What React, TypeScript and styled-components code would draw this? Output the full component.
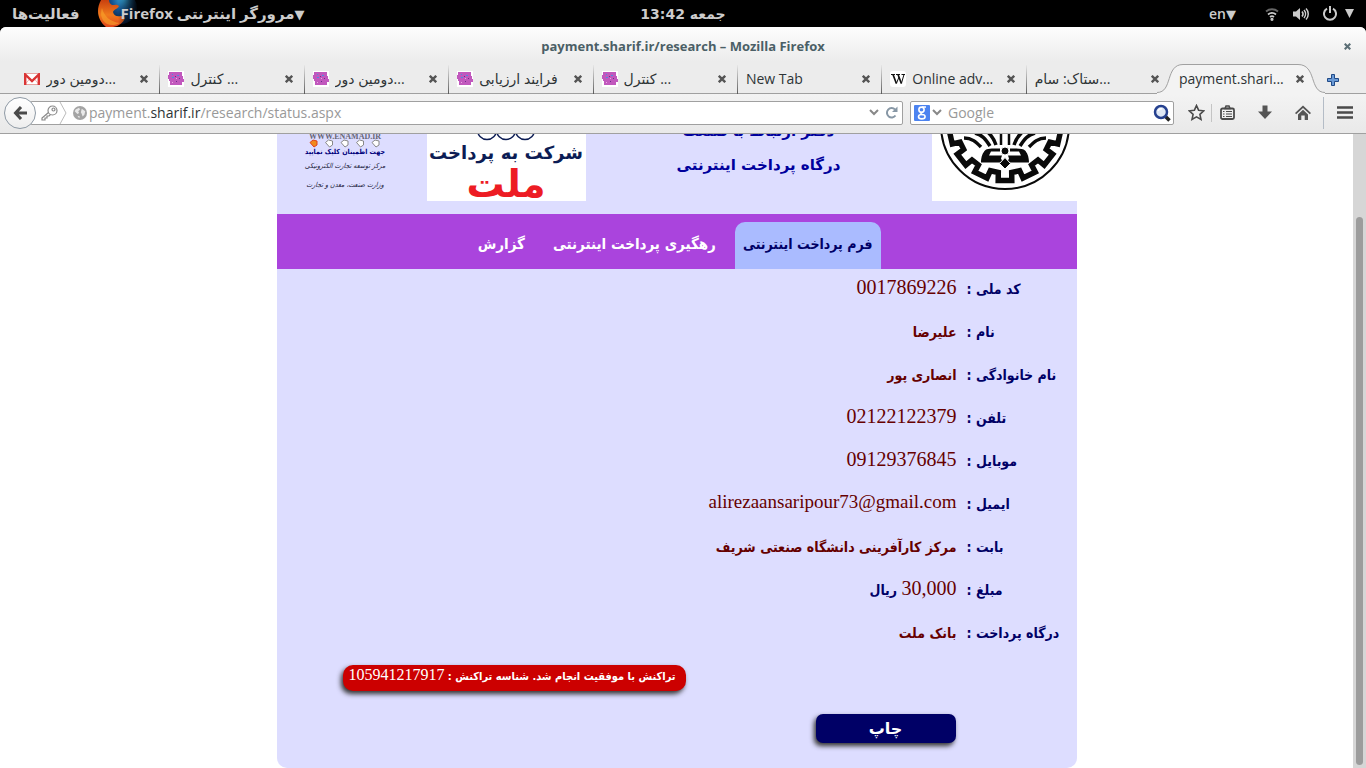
import React from 'react';
import styled, { createGlobalStyle } from 'styled-components';

const ui = "'Open Sans', 'DejaVu Sans', sans-serif";
const persian = "'DejaVu Sans Condensed', 'DejaVu Sans', sans-serif";

const Global = createGlobalStyle`
  * { box-sizing: border-box; }
  html, body { margin: 0; height: 100%; }
  body { background: #000; overflow: hidden; font-family: ${ui}; }
  #root { height: 100%; }
  button { border: 0; padding: 0; background: none; font: inherit; color: inherit; }
  svg { display: block; flex: none; }
`;

const Desktop = styled.div`
  height: 100%;
  display: flex;
  flex-direction: column;
`;

const TopBar = styled.header`
  height: 27px;
  flex: none;
  display: grid;
  grid-template-columns: 1fr auto 1fr;
  align-items: center;
  padding: 0 12px;
  color: #ccc;
  font: bold 14px/26px 'DejaVu Sans', sans-serif;
`;
const TopGroup = styled.div<{ $end?: boolean }>`
  display: flex;
  align-items: center;
  justify-content: ${p => (p.$end ? 'flex-end' : 'flex-start')};
  gap: ${p => (p.$end ? '14px' : '17px')};
  height: 27px;
`;
const Activities = styled.button`
  && { font-size: 15px; }
`;
const AppMenu = styled.button`
  && { display: flex; align-items: center; height: 27px; font: inherit; color: #ccc; }
`;
const AppName = styled.span`
  margin-left: -18px;
  font: bold 15px/26px ${ui};
`;
const MenuArrow = styled.span`
  font-size: 13px;
`;
const LangButton = styled.button`
  && { display: flex; font: 600 14px/26px ${ui}; margin-right: 15px; }
`;
const PowerGroup = styled.button`
  && { display: flex; align-items: center; gap: 8px; }
`;

const Window = styled.div`
  flex: 1;
  min-height: 0;
  display: flex;
  flex-direction: column;
  background: #ececec;
  border-radius: 6px 6px 0 0;
  overflow: hidden;
`;
const TitleBar = styled.div`
  height: 38px;
  flex: none;
  display: grid;
  grid-template-columns: 1fr auto 1fr;
  align-items: center;
  padding: 0 15px;
  background: linear-gradient(#fdfdfd, #ececec 34px);
  color: #4b5f66;
  font: bold 13px/38px 'Open Sans', sans-serif;
`;
const CloseWindow = styled.button`
  && { grid-column: 3; justify-self: end; }
`;
const Title = styled.h1`
  grid-column: 2;
  margin: 0;
  font: inherit;
`;

const TabStrip = styled.nav`
  height: 29px;
  flex: none;
  display: flex;
  padding: 0 27px 0 16px;
  background: linear-gradient(#a0a0a0, #a0a0a0) bottom / 100% 1px no-repeat;
`;
const TabItem = styled.div<{ $divider?: boolean }>`
  flex: 1 1 0;
  min-width: 0;
  display: flex;
  align-items: center;
  gap: 6px;
  padding: 0 11px 1px 8px;
  color: #2e3436;
  font-size: 14px;
  line-height: 28px;
  border-right: ${p => (p.$divider ? '1px solid' : '0 solid')};
  border-image: linear-gradient(#ececec, #555) 1;
`;
const TabLabel = styled.span`
  flex: 1;
  overflow: hidden;
  white-space: nowrap;
`;
const ActiveTab = styled.div`
  position: relative;
  flex: 0 0 141px;
  display: flex;
  align-items: center;
  padding: 0 7px 1px 9px;
  color: #2e3436;
  font-size: 14px;
  line-height: 28px;
`;
const ActiveShape = styled.svg`
  position: absolute;
  left: -13px;
  top: -1px;
`;
const ActiveContent = styled.span`
  position: relative;
  flex: 1;
  white-space: nowrap;
`;
const AboveShape = styled.button`
  && { position: relative; }
`;
const NewTabButton = styled.button`
  && { margin-left: 16px; }
`;

const Toolbar = styled.div`
  height: 40px;
  flex: none;
  display: flex;
  align-items: center;
  padding: 0 13px 2px 4px;
  background: linear-gradient(#f3f3f3, #e9e9e9);
  border-bottom: 1px solid #a0a0a0;
`;
const BackButton = styled.button`
  && {
    position: relative;
    z-index: 1;
    flex: none;
    width: 32px;
    height: 32px;
    border: 1px solid #8f9aa5;
    border-radius: 50%;
    background: linear-gradient(#fff, #eee);
    display: flex;
    align-items: center;
    justify-content: center;
  }
`;
const Field = styled.div<{ $search?: boolean }>`
  flex: ${p => (p.$search ? '0 0 264px' : '1')};
  margin-left: ${p => (p.$search ? '7px' : '-6px')};
  height: 24px;
  min-width: 0;
  display: flex;
  align-items: center;
  gap: ${p => (p.$search ? '2px' : '0')};
  padding: ${p => (p.$search ? '0 2px 0 3px' : '0 4px 0 10px')};
  border: 1px solid #a0a0a0;
  border-radius: 2px;
  background: #fff;
`;
const SiteIdentity = styled.span`
  display: flex;
  align-items: center;
  padding: 0 2px 0 5px;
`;
const Address = styled.div`
  flex: 1;
  font-size: 14px;
  line-height: 22px;
  white-space: nowrap;
  color: #999;
  b { font-weight: 400; color: #2e3436; }
`;
const Reload = styled.button`
  && { margin-left: 6px; }
`;
const SearchInput = styled.input`
  flex: 1;
  min-width: 0;
  border: 0;
  padding: 0;
  margin-left: 4px;
  outline: 0;
  background: none;
  font: 14px/22px 'Open Sans', sans-serif;
  &::placeholder { color: #999; opacity: 1; }
`;
const Tools = styled.div`
  display: flex;
  align-items: center;
  margin-left: 14px;
`;
const ToolButton = styled.button<{ $gap: number }>`
  && { margin-right: ${p => p.$gap}px; }
`;
const Rule = styled.span<{ $tall?: boolean; $gap: number }>`
  width: 1px;
  height: ${p => (p.$tall ? 32 : 18)}px;
  margin-right: ${p => p.$gap}px;
  background: ${p => (p.$tall ? '#b4bcc6' : '#c4c4c4')};
`;

const Viewport = styled.div`
  flex: 1;
  min-height: 0;
  display: flex;
  background: #fff;
`;
const Page = styled.main`
  flex: 1;
  min-width: 0;
  overflow: hidden;
  direction: rtl;
  font-family: ${persian};
`;
const ScrollTrack = styled.div`
  width: 13px;
  flex: none;
  background: #d6d6d6;
  padding: 83px 3px 3px;
  display: flex;
`;
const ScrollThumb = styled.div`
  flex: 1;
  border-radius: 4px;
  background: #9c9c9c;
`;
const Card = styled.article`
  width: 800px;
  max-width: 100%;
  min-height: 100%;
  margin: 0 auto;
  background: #ddf;
  border-radius: 0 0 10px 10px;
`;
const Banner = styled.header`
  height: 80px;
  padding: 0 0 13px 30px;
  display: flex;
  align-items: flex-end;
  overflow: hidden;
`;
const LogoBox = styled.div`
  width: 145px;
  height: 67px;
  background: #fff;
`;
const Headings = styled.div`
  flex: 1;
  text-align: center;
  color: #00009c;
  font: bold 15px/34px 'DejaVu Sans', sans-serif;
  margin-bottom: 19px;
  p { margin: 0; }
`;
const BankBox = styled.div`
  width: 159px;
  height: 67px;
  background: #fff;
  overflow: hidden;
  display: flex;
  flex-direction: column;
  align-items: center;
  white-space: nowrap;
`;
const BankCaption = styled.p`
  margin: 0;
  color: #0c1c54;
  font: bold 18px/24px 'DejaVu Sans', sans-serif;
`;
const BankName = styled.p`
  margin: 0;
  padding-top: 3px;
  color: #ed1c24;
  font: bold 38px/32px 'DejaVu Sans', sans-serif;
`;
const TrustSeal = styled.a`
  width: 77px;
  height: 67px;
  margin-right: 43px;
  text-decoration: none;
  white-space: nowrap;
  display: flex;
  flex-direction: column;
  align-items: center;
`;
const SealAddress = styled.span`
  color: #667;
  font: bold 8px/5px 'Liberation Serif', serif;
`;
const SealCall = styled.span`
  color: #00007a;
  font-size: 7px;
  font-weight: bold;
  line-height: 9px;
`;
const SealOwner = styled.span`
  color: #22223c;
  font-size: 7px;
  font-style: italic;
  line-height: 19px;
`;

const Menu = styled.nav`
  height: 55px;
  padding: 8px 196px 0 0;
  display: flex;
  background: #a4d;
`;
const MenuLink = styled.a<{ $active?: boolean }>`
  height: 47px;
  padding: 0 ${p => (p.$active ? 8 : 14)}px;
  margin-left: ${p => (p.$active ? 5 : 0)}px;
  border-radius: 10px 10px 0 0;
  background: ${p => (p.$active ? '#abf' : 'transparent')};
  color: ${p => (p.$active ? '#006' : '#fff')};
  font-weight: bold;
  font-size: ${p => (p.$active ? 14 : 15)}px;
  line-height: 44px;
  white-space: nowrap;
  text-decoration: none;
`;

const Details = styled.dl`
  margin: 0;
  padding: 0 0 9px;
`;
const Row = styled.div`
  height: 43px;
  display: grid;
  grid-template-columns: 110px 1fr;
  column-gap: 10px;
`;
const Term = styled.dt`
  color: #006;
  font-weight: bold;
  font-size: 14px;
  line-height: 40px;
  text-align: left;
  white-space: nowrap;
`;
const Value = styled.dd<{ $kind: 'digits' | 'latin' | 'persian' }>`
  margin: 0;
  color: #600;
  white-space: nowrap;
  font-family: ${p => (p.$kind === 'persian' ? persian : "'Liberation Serif', serif")};
  font-weight: ${p => (p.$kind === 'persian' ? 'bold' : 'normal')};
  font-size: ${p => ({ digits: 20, latin: 19, persian: 14 })[p.$kind]}px;
  line-height: ${p => (p.$kind === 'persian' ? 40 : 36)}px;
`;
const Unit = styled.span`
  color: #006;
  font: bold 14px ${persian};
`;
const Status = styled.p`
  width: 343px;
  height: 26px;
  margin: 0 391px 0 0;
  padding: 0 10px;
  border-radius: 10px;
  background: #c00;
  box-shadow: -2px 3px 5px #333;
  color: #fff;
  white-space: nowrap;
  font: bold 11px/24px ${persian};
`;
const Code = styled.span`
  font: 16px 'Liberation Serif', serif;
`;
const PrintButton = styled.button`
  && {
    display: block;
    width: 140px;
    height: 29px;
    margin: 23px 121px 0 0;
    border-radius: 7px;
    background: #006;
    box-shadow: -2px 3px 5px #333;
    color: #fff;
    font: bold 16px/28px 'DejaVu Sans', sans-serif;
  }
`;

const Cross = ({ size = 8, color = '#555' }: { size?: number; color?: string }) => (
  <svg width={size} height={size} viewBox="0 0 8 8" stroke={color} strokeWidth="2.4">
    <path d="M.8.8l6.4 6.4M7.2.8L.8 7.2" />
  </svg>
);
const Chevron = () => (
  <svg width="10" height="7" viewBox="0 0 10 7" fill="none" stroke="#888" strokeWidth="2"><path d="M1 1l4 4 4-4" /></svg>
);

const FirefoxIcon = () => (
  <svg width="42" height="27" viewBox="0 0 42 27">
    <defs>
      <radialGradient id="globe" cx=".6" cy=".2" r=".8"><stop offset="0" stopColor="#3bb4e8" /><stop offset=".5" stopColor="#14528f" /><stop offset="1" stopColor="#06162f" /></radialGradient>
      <linearGradient id="fox" x1="0" y1="0" x2="0" y2="1"><stop offset="0" stopColor="#c9400f" /><stop offset=".55" stopColor="#f07a1c" /><stop offset="1" stopColor="#e0451b" /></linearGradient>
      <linearGradient id="fade"><stop offset=".5" stopColor="#000" stopOpacity="0" /><stop offset="1" stopColor="#000" /></linearGradient>
    </defs>
    <circle cx="24" cy="8" r="16" fill="url(#globe)" />
    <path d="M4 0h8c0 2 1 4 3 5 3 0 5-1 7 1-1 3-5 3-6 6 1 4 4 5 8 4 2 0 3 1 4 2-2 5-6 8-12 9H9C0 20-1 9 4 0z" fill="url(#fox)" />
    <path d="M5 8c2 8 8 14 18 15-4 2-9 3-13 1C4 20 3 14 5 8z" fill="#f9a52b" opacity=".6" />
    <rect width="42" height="27" fill="url(#fade)" />
  </svg>
);
const GmailIcon = () => (
  <svg width="16" height="12" viewBox="0 0 16 12">
    <rect width="16" height="12" fill="#fff" />
    <path d="M1 11.5l5-6M15 11.5l-5-6" stroke="#f3b7b4" />
    <path d="M.5 11.500h15V.5H.5z" fill="none" stroke="#e8a5a2" />
    <path d="M1.200 12V1.500L8 8l6.800-6.500V12" fill="none" stroke="#da3535" strokeWidth="2.400" />
  </svg>
);
const SiteIcon = () => (
  <svg width="16" height="16" viewBox="0 0 16 16">
    <rect width="16" height="16" fill="#fff" />
    <path d="M1 1h13v4h1v3h1v3h-2v3H2v-4H1V8H0V4h1z" fill="#c158bd" />
    <path d="M4 3h1v1H4zM9 4h2v1H9zM4 6h2v1H4z" fill="#4a8fe0" />
    <path d="M7 5h1v1H7zM11 7h1v1h-1zM8 10h1v1H8z" fill="#6b2c8a" />
    <path d="M8 7h1v1H8zM4 11h1v1H4z" fill="#f0a8e4" />
  </svg>
);
const WikiIcon = () => (
  <svg width="16" height="16" viewBox="0 0 16 16">
    <rect width="16" height="16" rx="3" fill="#fff" />
    <path d="M1 3.500h4M6 3.500h4M11.500 3.500H15" stroke="#111" />
    <path d="M3 3.500l3.400 9M8 3.500l3.400 9" fill="none" stroke="#111" strokeWidth="1.700" />
    <path d="M6.400 12.500L9 6M11.400 12.500l2.600-9" fill="none" stroke="#111" />
  </svg>
);

const gearPath = (() => {
  const point = (r: number, degrees: number) => {
    const a = (degrees * Math.PI) / 180;
    return `${(73 + r * Math.sin(a)).toFixed(1)} ${(-9 + r * Math.cos(a)).toFixed(1)}`;
  };
  return 'M' + [-4, -3, -2, -1, 0, 1, 2, 3, 4]
    .map(i => (i * 360) / 14)
    .map(a => [point(48, a - 8), point(56, a - 7), point(56, a + 7), point(48, a + 8)].join(' L'))
    .join(' L');
})();

const LogoHalf = () => (
  <>
    <path d="M32 4c8 0 12 4 17 9M43-1c8 2 11 7 15 13M53-4c6 4 9 9 11 15" strokeWidth="3.500" />
    <path d="M69-2v13" strokeWidth="2.500" />
    <path d="M49 28.500c0-6 2-10 4-12 2-2 6-2 15-2v3h-9l-2 4h13l-1 3 2 4z" fill="#0a0a0a" stroke="none" />
  </>
);
const SharifLogo = () => (
  <svg width="145" height="67" viewBox="0 0 145 67" fill="none" stroke="#0a0a0a">
    <circle cx="73" cy="-9" r="64" strokeWidth="2" />
    <path d={gearPath} strokeWidth="5.500" />
    <LogoHalf />
    <g transform="matrix(-1 0 0 1 146 0)"><LogoHalf /></g>
    <circle cx="73" cy="17" r="4" fill="#0a0a0a" stroke="#fff" />
    <path d="M73 23.500l5.500 6-5.500 5.500-5.500-5.500z" fill="#0a0a0a" stroke="#fff" />
  </svg>
);
const BankRings = () => (
  <svg width="60" height="7" viewBox="0 0 60 7" fill="none" stroke="#0c1c54" strokeWidth="1.500">
    <circle cx="11" cy="-4" r="9.500" /><circle cx="30" cy="-4" r="9.500" /><circle cx="49" cy="-4" r="9.500" />
  </svg>
);
const SealTags = () => (
  <svg width="72" height="9" viewBox="0 0 72 9">
    {[0, 1, 2, 3, 4].map(i => (
      <path
        key={i}
        transform={`translate(${i * 15.5} 0)`}
        d="M1 3.500L4 1l4 1v4L5 8z"
        fill={i === 0 ? '#f08a1c' : '#fff'}
        stroke={i === 0 ? '#e0401c' : '#888'}
      />
    ))}
  </svg>
);

const tabs = [
  { icon: 'gmail', label: 'دومین دور...' },
  { icon: 'site', label: 'کنترل ...' },
  { icon: 'site', label: 'دومین دور...' },
  { icon: 'site', label: 'فرایند ارزیابی' },
  { icon: 'site', label: 'کنترل ...' },
  { icon: '', label: 'New Tab' },
  { icon: 'wiki', label: 'Online adv...' },
  { icon: '', label: 'ستاک: سام...' },
];

const rows: { term: string; value: string; kind: 'digits' | 'latin' | 'persian'; unit?: string }[] = [
  { term: 'کد ملی :', value: '0017869226', kind: 'digits' },
  { term: 'نام :', value: 'علیرضا', kind: 'persian' },
  { term: 'نام خانوادگی :', value: 'انصاری پور', kind: 'persian' },
  { term: 'تلفن :', value: '02122122379', kind: 'digits' },
  { term: 'موبایل :', value: '09129376845', kind: 'digits' },
  { term: 'ایمیل :', value: 'alirezaansaripour73@gmail.com', kind: 'latin' },
  { term: 'بابت :', value: 'مرکز کارآفرینی دانشگاه صنعتی شریف', kind: 'persian' },
  { term: 'مبلغ :', value: '30,000', kind: 'digits', unit: 'ریال' },
  { term: 'درگاه پرداخت :', value: 'بانک ملت', kind: 'persian' },
];

export default function App() {
  return (
    <Desktop>
      <Global />
      <TopBar>
        <TopGroup>
          <Activities>فعالیت‌ها</Activities>
          <AppMenu aria-label="Firefox">
            <FirefoxIcon />
            <AppName dir="rtl"><MenuArrow>▼</MenuArrow>مرورگر اینترنتی Firefox</AppName>
          </AppMenu>
        </TopGroup>
        <span dir="rtl">جمعه 13:42</span>
        <TopGroup $end>
          <LangButton>en<MenuArrow>▼</MenuArrow></LangButton>
          <svg width="14" height="14" viewBox="0 0 14 14" fill="none" stroke="#ccc" strokeWidth="1.800">
            <path d="M1 4.500c3.500-3 8.500-3 12 0" stroke="#666" /><path d="M3 7.500c2.500-2 5.500-2 8 0M5 10c1.200-1 2.800-1 4 0" /><circle cx="7" cy="12.300" r=".7" fill="#ccc" />
          </svg>
          <svg width="16" height="14" viewBox="0 0 16 14" fill="none" stroke="#ccc" strokeWidth="1.500">
            <path d="M0 4.500h3L7 1v12L3 9.500H0z" fill="#ccc" stroke="none" /><path d="M9 4.500c1.300 1.500 1.300 3.500 0 5M11 3c2 2.300 2 5.700 0 8M13 1.500c3 3 3 8 0 11" />
          </svg>
          <PowerGroup aria-label="Power">
            <svg width="14" height="15" viewBox="0 0 14 15" fill="none" stroke="#ccc" strokeWidth="2">
              <path d="M4 2.600a6 6 0 1 0 6 0M7 0v7" />
            </svg>
            <svg width="9" height="9" viewBox="0 0 9 9"><path d="M0 0h9L4.500 9z" fill="#ccc" /></svg>
          </PowerGroup>
        </TopGroup>
      </TopBar>

      <Window>
        <TitleBar>
          <Title>payment.sharif.ir/research – Mozilla Firefox</Title>
          <CloseWindow aria-label="Close window"><Cross size={7} color="#5c6f76" /></CloseWindow>
        </TitleBar>

        <TabStrip>
          {tabs.map((t, i) => (
            <TabItem key={i} $divider={i < tabs.length - 1}>
              {t.icon === 'gmail' && <GmailIcon />}
              {t.icon === 'site' && <SiteIcon />}
              {t.icon === 'wiki' && <WikiIcon />}
              <TabLabel>{t.label}</TabLabel>
              <button aria-label="Close tab"><Cross /></button>
            </TabItem>
          ))}
          <ActiveTab>
            <ActiveShape width="168" height="31" viewBox="0 0 168 31" aria-hidden="true">
              <path d="M0 28.500C16 28.500 8 .5 26 .5H141C160 .5 152 28.500 168 28.500V31H0z" fill="#f3f3f3" />
              <path d="M0 28.500C16 28.500 8 .5 26 .5H141C160 .5 152 28.500 168 28.500" fill="none" stroke="#a0a0a0" />
            </ActiveShape>
            <ActiveContent>payment.shari...</ActiveContent>
            <AboveShape aria-label="Close tab"><Cross /></AboveShape>
          </ActiveTab>
          <NewTabButton aria-label="New tab">
            <svg width="12" height="12" viewBox="0 0 12 12"><path d="M4.500.5h3v4h4v3h-4v4h-3v-4h-4v-3h4z" fill="#6a9ad6" stroke="#204a87" /></svg>
          </NewTabButton>
        </TabStrip>

        <Toolbar>
          <BackButton aria-label="Back">
            <svg width="15" height="14" viewBox="0 0 15 14" fill="none" stroke="#4a4a4a" strokeWidth="3"><path d="M8 1L2.500 7 8 13M2.500 7H14" /></svg>
          </BackButton>
          <Field>
            <svg width="18" height="16" viewBox="0 0 18 16" fill="none" stroke="#888" strokeWidth="1.200">
              <circle cx="11.500" cy="5.500" r="4.500" /><circle cx="12.500" cy="4.500" r="1.500" /><path d="M7.500 7.500L1 13v2h3v-2h2v-2h2l1.500-1.500" />
            </svg>
            <svg width="9" height="22" viewBox="0 0 9 22" fill="none" stroke="#bbb"><path d="M1 0l6 11-6 11" /></svg>
            <SiteIdentity>
              <svg width="14" height="14" viewBox="0 0 16 16">
                <circle cx="8" cy="8" r="8" fill="#a4a4a4" /><path d="M3 4l4-2 1 2-2 2 1 2-2 1-3-3zM10 3l4 3-1 4-2 2-1-3-1-2zM5 11l3 1-1 2z" fill="#e9e9e9" />
              </svg>
            </SiteIdentity>
            <Address>payment.<b>sharif.ir</b>/research/status.aspx</Address>
            <Chevron />
            <Reload aria-label="Reload">
              <svg width="13" height="13" viewBox="0 0 13 13" fill="none" stroke="#8797a5" strokeWidth="2">
                <path d="M10.500 9.500a4.700 4.700 0 1 1-.5-6" /><path d="M12.500.5v5.500H7z" fill="#8797a5" stroke="none" />
              </svg>
            </Reload>
          </Field>
          <Field $search>
            <svg width="16" height="16" viewBox="0 0 16 16" fill="none" stroke="#fff" strokeWidth="1.600">
              <rect width="16" height="16" rx="1" fill="#4c83f0" stroke="none" /><circle cx="7.500" cy="4.700" r="2.600" /><path d="M8 2h4M8 7.300c-2 1-1 2 .5 2.500" /><ellipse cx="7.800" cy="11.700" rx="3.300" ry="2.200" />
            </svg>
            <Chevron />
            <SearchInput placeholder="Google" aria-label="Search" />
            <svg width="18" height="18" viewBox="0 0 18 18" fill="none">
              <path d="M12 12l4.500 4.500" stroke="#222" strokeWidth="3.500" /><circle cx="8" cy="8" r="6" fill="#dfe8f5" stroke="#26418f" strokeWidth="2.500" /><path d="M5 7c1-2 3-2.500 4-2" stroke="#fff" strokeWidth="1.500" />
            </svg>
          </Field>
          <Tools>
            <ToolButton $gap={6} aria-label="Bookmark">
              <svg width="17" height="17" viewBox="0 0 17 17" fill="none" stroke="#4a4a4a" strokeWidth="1.600"><path d="M8.500 1.500l2.100 4.700 5.200.6-3.900 3.500 1.100 5.100-4.500-2.600L4 15.400l1.100-5.100-3.900-3.500 5.200-.6z" /></svg>
            </ToolButton>
            <Rule $gap={8} />
            <ToolButton $gap={23} aria-label="Bookmarks list">
              <svg width="15" height="15" viewBox="0 0 15 15" fill="none" stroke="#4a4a4a">
                <rect x="1" y="3.500" width="13" height="10.500" rx="1.500" strokeWidth="1.800" /><path d="M5 3.500L6 1h3l1 2.500z" strokeWidth="1.500" /><path d="M3 6.500h1.500M6 6.500h6M3 9h1.500M6 9h6M3 11.500h1.500M6 11.500h6" strokeWidth="1.200" />
              </svg>
            </ToolButton>
            <ToolButton $gap={23} aria-label="Downloads">
              <svg width="14" height="15" viewBox="0 0 14 15"><path d="M4.500.5h5v6H14l-7 7.500-7-7.500h4.500z" fill="#555" /></svg>
            </ToolButton>
            <ToolButton $gap={12} aria-label="Home">
              <svg width="16" height="15" viewBox="0 0 16 15" fill="#555"><path d="M8 .5l8 7.500-1.200 1.200L8 3 1.200 9.200 0 8zM3 9.500l5-4.700 5 4.700V15H9.700v-4.500H6.300V15H3z" /></svg>
            </ToolButton>
            <Rule $tall $gap={13} />
            <button aria-label="Menu">
              <svg width="16" height="13" viewBox="0 0 16 13" stroke="#4a4a4a" strokeWidth="2.500"><path d="M0 1.500h16M0 6.500h16M0 11.500h16" /></svg>
            </button>
          </Tools>
        </Toolbar>

        <Viewport>
          <Page>
            <Card>
              <Banner>
                <LogoBox><SharifLogo /></LogoBox>
                <Headings>
                  <p>دفتر ارتباط با صنعت</p>
                  <p>درگاه پرداخت اینترنتی</p>
                </Headings>
                <BankBox>
                  <BankRings />
                  <BankCaption>شرکت به پرداخت</BankCaption>
                  <BankName>ملت</BankName>
                </BankBox>
                <TrustSeal href="#">
                  <SealAddress>WWW.ENAMAD.IR</SealAddress>
                  <SealTags />
                  <SealCall>جهت اطمینان کلیک نمایید</SealCall>
                  <SealOwner>مرکز توسعه تجارت الکترونیکی</SealOwner>
                  <SealOwner>وزارت صنعت، معدن و تجارت</SealOwner>
                </TrustSeal>
              </Banner>
              <Menu>
                <MenuLink href="#" $active>فرم پرداخت اینترنتی</MenuLink>
                <MenuLink href="#">رهگیری پرداخت اینترنتی</MenuLink>
                <MenuLink href="#">گزارش</MenuLink>
              </Menu>
              <Details>
                {rows.map(r => (
                  <Row key={r.term}>
                    <Term>{r.term}</Term>
                    <Value $kind={r.kind}>{r.value}{r.unit && <Unit> {r.unit}</Unit>}</Value>
                  </Row>
                ))}
              </Details>
              <Status>تراکنش با موفقیت انجام شد. شناسه تراکنش : <Code>105941217917</Code></Status>
              <PrintButton>چاپ</PrintButton>
            </Card>
          </Page>
          <ScrollTrack><ScrollThumb /></ScrollTrack>
        </Viewport>
      </Window>
    </Desktop>
  );
}
